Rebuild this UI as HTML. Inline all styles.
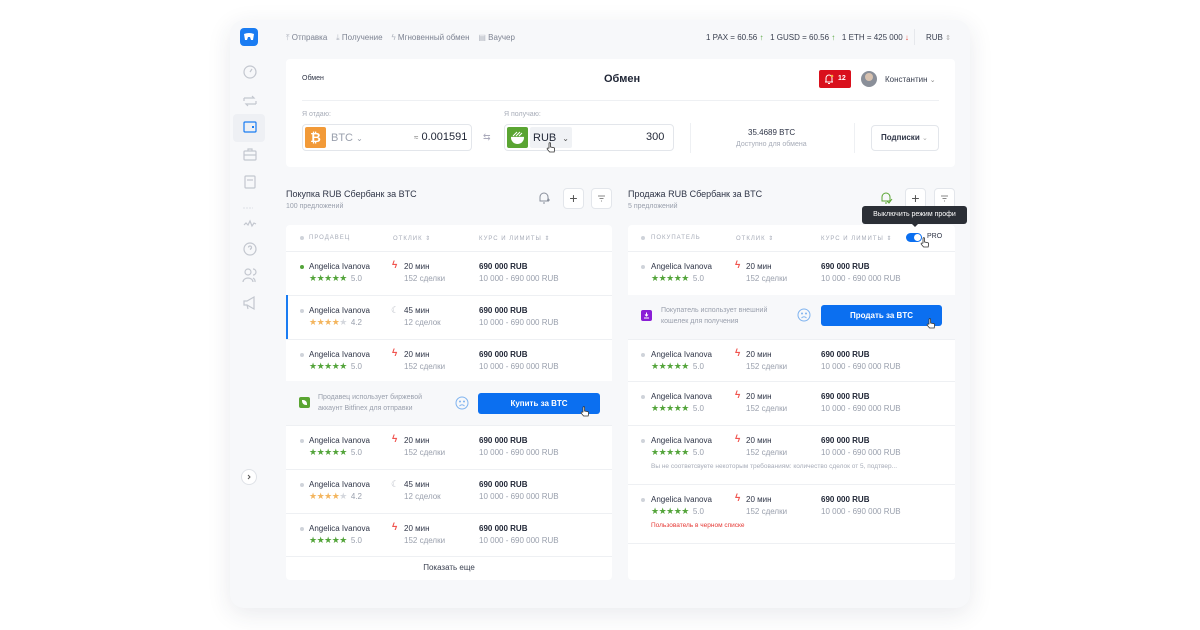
<!DOCTYPE html>
<html><head><meta charset="utf-8">
<style>
*{margin:0;padding:0;box-sizing:border-box}
body{width:1200px;height:630px;background:#fff;font-family:"Liberation Sans",sans-serif;color:#2a3040;position:relative;overflow:hidden}
.a{position:absolute}
.card{left:230px;top:20px;width:740px;height:588px;background:#f7f8fa;border-radius:14px;box-shadow:0 6px 24px rgba(40,50,80,.10)}
.panel{background:#fff;border-radius:4px}
.t8{font-size:8px}
.nm{font-size:8px;color:#2f3547}
.st{font-size:9px;letter-spacing:-0.5px;color:#53a43a}
.st.o{color:#f3b55e}
.st .e{color:#d4d7dd}
.rt{font-size:8px;color:#9aa0ad;margin-left:4px;letter-spacing:0}
.pr{font-size:8px;font-weight:bold;color:#1f2535}
.lm{font-size:8px;color:#9aa0ad}
.hd{font-size:6px;letter-spacing:1px;color:#a7acb8}
.line{height:1px;background:#eef0f3}
.dot{width:4px;height:4px;border-radius:50%;background:#cfd3da}
.btn{border:1px solid #e3e6eb;border-radius:4px;background:#fff}
.bolt{font-size:10px;color:#f0544f;font-weight:bold}
</style></head><body>
<div class="a card"></div>
<div class="a" style="left:240px;top:28px;width:18px;height:18px;border-radius:4px;background:#1a7cf2"></div>
<svg class="a" style="left:243px;top:32px" width="12" height="10" viewBox="0 0 12 10"><path d="M1 2 Q6 0 11 2 L10 8 L8 8 L7 5 L5 5 L4 8 L2 8Z" fill="#fff"/></svg>
<div class="a" style="left:233px;top:114px;width:32px;height:28px;border-radius:4px;background:#eef0f4"></div>
<svg class="a" style="left:240px;top:63px" width="20" height="260" viewBox="0 0 20 260" fill="none" stroke="#c3c7cf" stroke-width="1.2">
<circle cx="10" cy="9" r="6"/><path d="M10 9 L12 6"/>
<path d="M4 35 h10 l-2 -2 M16 41 h-10 l2 2 M4 35 v3 M16 41 v-3"/>
<rect x="4" y="59" width="12" height="10" rx="1" stroke="#1a7cf2"/><rect x="12" y="63" width="2" height="2" fill="#1a7cf2" stroke="none"/>
<rect x="4" y="88" width="12" height="9" rx="1"/><path d="M8 88 v-2 h4 v2 M4 92 h12"/>
<rect x="5" y="113" width="10" height="12" rx="1"/><path d="M7 117 h6"/>
<path d="M3 145 h10" stroke="#e3e5ea" stroke-dasharray="2 1"/>
<path d="M4 162 l2 -2 l2 2 l2 -4 l2 5 l2 -3 l2 1"/>
<circle cx="10" cy="186" r="6"/><path d="M8.5 184.5 a1.5 1.5 0 1 1 2 1.4 v1"/>
<circle cx="8" cy="209" r="3"/><path d="M3 219 a5 4 0 0 1 10 0 M13 206 a3 3 0 0 1 0 6 M15 219 a4 4 0 0 0 -2 -4"/>
<path d="M4 238 h3 l7 -4 v12 l-7 -4 h-3z M7 242 l1 4"/>
</svg>
<div class="a" style="left:241px;top:469px;width:16px;height:16px;border-radius:50%;background:#fff;border:1px solid #dfe2e7"></div>
<svg class="a" style="left:246px;top:474px" width="6" height="6" viewBox="0 0 6 6"><path d="M2 1 L4 3 L2 5" stroke="#555" fill="none"/></svg>
<div class="a t8" style="left:286px;top:33px;color:#7d8392">
<span style="color:#b0b5bf">⤒</span> Отправка &nbsp;&nbsp; <span style="color:#b0b5bf">⤓</span> Получение &nbsp;&nbsp; <span style="color:#b0b5bf">ϟ</span> Мгновенный обмен &nbsp;&nbsp; <span style="color:#b0b5bf">▤</span> Ваучер</div>
<div class="a t8" style="left:706px;top:33px;color:#3a4050">1 PAX = 60.56 <span style="color:#53a43a">↑</span>&nbsp;&nbsp; 1 GUSD = 60.56 <span style="color:#53a43a">↑</span>&nbsp;&nbsp; 1 ETH = 425 000 <span style="color:#e64a3c">↓</span></div>
<div class="a" style="left:914px;top:29px;width:1px;height:16px;background:#e6e8ec"></div>
<div class="a t8" style="left:926px;top:33px;color:#3a4050">RUB <span style="color:#aaa;font-size:7px">⇕</span></div>
<div class="a panel" style="left:286px;top:59px;width:669px;height:108px"></div>
<div class="a" style="left:302px;top:75px;font-size:7px;color:#2f3547">Обмен</div>
<div class="a" style="left:604px;top:73px;font-size:11px;font-weight:bold;color:#1f2535">Обмен</div>
<div class="a" style="left:819px;top:70px;width:32px;height:18px;border-radius:2px;background:#d9101c"></div>
<svg class="a" style="left:823px;top:73px" width="12" height="12" viewBox="0 0 12 12" fill="none" stroke="#fff" stroke-width="1"><path d="M3 9 V5 a3 3 0 0 1 6 0 V9 Z M2 9 h8 M5 10.5 h2"/><circle cx="9" cy="3" r="1.3" fill="#f6b042" stroke="none"/></svg>
<div class="a" style="left:838px;top:75px;font-size:7px;font-weight:bold;color:#fff">12</div>
<div class="a" style="left:861px;top:71px;width:16px;height:16px;border-radius:50%;background:#8a8f99"></div>
<div class="a" style="left:865px;top:73px;width:8px;height:8px;border-radius:50%;background:#d8c2b0"></div>
<div class="a t8" style="left:885px;top:75px;color:#3a4050">Константин <span style="color:#888;font-size:7px">⌄</span></div>
<div class="a line" style="left:302px;top:100px;width:637px"></div>
<div class="a" style="left:302px;top:111px;font-size:7px;color:#a7acb8">Я отдаю:</div>
<div class="a" style="left:504px;top:111px;font-size:7px;color:#a7acb8">Я получаю:</div>
<div class="a btn" style="left:302px;top:124px;width:170px;height:27px"></div>
<div class="a" style="left:305px;top:127px;width:21px;height:21px;border-radius:2px;background:#f29a38;color:#fff;font-weight:bold;font-size:13px;text-align:center;line-height:21px">₿</div>
<div class="a" style="left:331px;top:132px;font-size:11px;color:#9aa0ad">BTC <span style="font-size:8px">⌄</span></div>
<div class="a" style="left:414px;top:131px;font-size:11px;color:#1f2535"><span style="font-size:8px;color:#777">≈</span> 0.001591</div>
<div class="a" style="left:483px;top:132px;font-size:9px;color:#aab">⇆</div>
<div class="a btn" style="left:504px;top:124px;width:170px;height:27px"></div>
<div class="a" style="left:530px;top:127px;width:42px;height:21px;border-radius:2px;background:#f0f2f5"></div>
<div class="a" style="left:507px;top:127px;width:21px;height:21px;border-radius:2px;background:#5aa532"></div>
<div class="a" style="left:511px;top:131px;width:13px;height:13px;border-radius:50%;background:#fff;clip-path:inset(45% 0 0 0)"></div>
<svg class="a" style="left:511px;top:130px" width="13" height="7"><path d="M2 6 L6 2 M5 6 L9 2 M8 6 L11 3" stroke="#fff" stroke-width="1"/></svg>
<div class="a" style="left:533px;top:132px;font-size:11px;color:#1f2535">RUB <span style="font-size:8px;color:#555;margin-left:3px">⌄</span></div>
<div class="a" style="left:646px;top:131px;font-size:11px;color:#1f2535">300</div>
<div class="a" style="left:690px;top:123px;width:1px;height:30px;background:#eef0f3"></div>
<div class="a" style="left:854px;top:123px;width:1px;height:30px;background:#eef0f3"></div>
<div class="a" style="left:748px;top:128px;font-size:8px;color:#2f3547">35.4689 BTC</div>
<div class="a" style="left:736px;top:141px;font-size:7px;color:#a7acb8">Доступно для обмена</div>
<div class="a btn" style="left:871px;top:125px;width:68px;height:26px"></div>
<div class="a" style="left:881px;top:133px;font-size:8px;font-weight:bold;color:#2f3547">Подписки <span style="font-weight:normal;color:#aaa;font-size:7px">⌄</span></div>

<div class="a" style="left:286px;top:189px;font-size:9px;color:#2f3547">Покупка RUB Сбербанк за BTC</div>
<div class="a" style="left:286px;top:203px;font-size:7px;color:#9aa0ad">100 предложений</div>
<svg class="a" style="left:537px;top:191px" width="14" height="14" viewBox="0 0 14 14" fill="none" stroke="#8a909c" stroke-width="1"><path d="M3 10 V6 a4 4 0 0 1 8 0 V10 Z M6 12 h2 M10 9 h3 M11.5 7.5 v3"/></svg>
<div class="a btn" style="left:563px;top:188px;width:21px;height:21px;text-align:center;line-height:19px;font-size:14px;color:#555">+</div>
<div class="a btn" style="left:591px;top:188px;width:21px;height:21px"></div>
<svg class="a" style="left:597px;top:194px" width="9" height="9"><path d="M1 2h7M2.5 4.5h4M4 7h1" stroke="#888"/></svg>
<div class="a" style="left:628px;top:189px;font-size:9px;color:#2f3547">Продажа RUB Сбербанк за BTC</div>
<div class="a" style="left:628px;top:203px;font-size:7px;color:#9aa0ad">5 предложений</div>
<svg class="a" style="left:879px;top:191px" width="14" height="14" viewBox="0 0 14 14" fill="none" stroke="#5aa532" stroke-width="1"><path d="M3 10 V6 a4 4 0 0 1 8 0 V10 Z M6 12 h2 M8 10 l2 2 l3 -4"/></svg>
<div class="a btn" style="left:905px;top:188px;width:21px;height:21px;text-align:center;line-height:19px;font-size:14px;color:#555">+</div>
<div class="a btn" style="left:934px;top:188px;width:21px;height:21px"></div>
<svg class="a" style="left:940px;top:194px" width="9" height="9"><path d="M1 2h7M2.5 4.5h4M4 7h1" stroke="#888"/></svg>

<div class="a panel" style="left:286px;top:225px;width:326px;height:355px;overflow:hidden">
 <div class="a dot" style="left:14px;top:11px"></div>
 <div class="a hd" style="left:23px;top:10px">ПРОДАВЕЦ</div>
 <div class="a hd" style="left:107px;top:10px">ОТКЛИК ⇕</div>
 <div class="a hd" style="left:193px;top:10px">КУРС И ЛИМИТЫ ⇕</div>
 <div class="a line" style="left:0;top:26px;width:326px"></div>
 <div class="a" style="left:0;top:26px;width:326px;height:44px">
  <div class="a dot" style="left:14px;top:14px;background:#53a43a"></div>
  <div class="a nm" style="left:23px;top:11px">Angelica Ivanova</div>
  <div class="a st" style="left:23px;top:22px">★★★★★<span class="rt">5.0</span></div>
  <div class="a bolt" style="left:106px;top:9px">ϟ</div>
  <div class="a nm" style="left:118px;top:11px">20 мин</div>
  <div class="a lm" style="left:118px;top:23px">152 сделки</div>
  <div class="a pr" style="left:193px;top:11px">690 000 RUB</div>
  <div class="a lm" style="left:193px;top:23px">10 000 - 690 000 RUB</div>
 </div>
 <div class="a line" style="left:0;top:70px;width:326px"></div>
 <div class="a" style="left:0;top:70px;width:2px;height:44px;background:#1a7cf2"></div>
 <div class="a" style="left:0;top:70px;width:326px;height:44px">
  <div class="a dot" style="left:14px;top:14px"></div>
  <div class="a nm" style="left:23px;top:11px">Angelica Ivanova</div>
  <div class="a st o" style="left:23px;top:22px">★★★★<span class="e">★</span><span class="rt">4.2</span></div>
  <div class="a" style="left:105px;top:10px;font-size:9px;color:#b9bdc6">☾</div>
  <div class="a nm" style="left:118px;top:11px">45 мин</div>
  <div class="a lm" style="left:118px;top:23px">12 сделок</div>
  <div class="a pr" style="left:193px;top:11px">690 000 RUB</div>
  <div class="a lm" style="left:193px;top:23px">10 000 - 690 000 RUB</div>
 </div>
 <div class="a line" style="left:0;top:114px;width:326px"></div>
 <div class="a" style="left:0;top:114px;width:326px;height:42px">
  <div class="a dot" style="left:14px;top:14px"></div>
  <div class="a nm" style="left:23px;top:11px">Angelica Ivanova</div>
  <div class="a st" style="left:23px;top:22px">★★★★★<span class="rt">5.0</span></div>
  <div class="a bolt" style="left:106px;top:9px">ϟ</div>
  <div class="a nm" style="left:118px;top:11px">20 мин</div>
  <div class="a lm" style="left:118px;top:23px">152 сделки</div>
  <div class="a pr" style="left:193px;top:11px">690 000 RUB</div>
  <div class="a lm" style="left:193px;top:23px">10 000 - 690 000 RUB</div>
 </div>
 <div class="a" style="left:0;top:156px;width:326px;height:44px;background:#f7f8fa">
  <div class="a" style="left:13px;top:16px;width:11px;height:11px;border-radius:2px;background:#5aa532"></div>
  <div class="a" style="left:16px;top:19px;width:5px;height:5px;border-radius:0 4px 0 4px;background:#fff"></div>
  <div class="a" style="left:32px;top:11px;font-size:7px;line-height:11px;color:#9aa0ad">Продавец использует биржевой<br>аккаунт Bitfinex для отправки</div>
  <svg class="a" style="left:169px;top:15px" width="14" height="14" viewBox="0 0 14 14" fill="none" stroke="#7fb3ef" stroke-width="1"><circle cx="7" cy="7" r="6"/><path d="M4.5 10 q2.5-2.5 5 0"/><circle cx="5" cy="5.5" r=".5" fill="#7fb3ef"/><circle cx="9" cy="5.5" r=".5" fill="#7fb3ef"/></svg>
  <div class="a" style="left:192px;top:12px;width:122px;height:21px;border-radius:3px;background:#0b6ff0;color:#fff;font-size:8px;font-weight:bold;text-align:center;line-height:21px">Купить за BTC</div>
 </div>
 <div class="a line" style="left:0;top:200px;width:326px"></div>
 <div class="a" style="left:0;top:200px;width:326px;height:44px">
  <div class="a dot" style="left:14px;top:14px"></div>
  <div class="a nm" style="left:23px;top:11px">Angelica Ivanova</div>
  <div class="a st" style="left:23px;top:22px">★★★★★<span class="rt">5.0</span></div>
  <div class="a bolt" style="left:106px;top:9px">ϟ</div>
  <div class="a nm" style="left:118px;top:11px">20 мин</div>
  <div class="a lm" style="left:118px;top:23px">152 сделки</div>
  <div class="a pr" style="left:193px;top:11px">690 000 RUB</div>
  <div class="a lm" style="left:193px;top:23px">10 000 - 690 000 RUB</div>
 </div>
 <div class="a line" style="left:0;top:244px;width:326px"></div>
 <div class="a" style="left:0;top:244px;width:326px;height:44px">
  <div class="a dot" style="left:14px;top:14px"></div>
  <div class="a nm" style="left:23px;top:11px">Angelica Ivanova</div>
  <div class="a st o" style="left:23px;top:22px">★★★★<span class="e">★</span><span class="rt">4.2</span></div>
  <div class="a" style="left:105px;top:10px;font-size:9px;color:#b9bdc6">☾</div>
  <div class="a nm" style="left:118px;top:11px">45 мин</div>
  <div class="a lm" style="left:118px;top:23px">12 сделок</div>
  <div class="a pr" style="left:193px;top:11px">690 000 RUB</div>
  <div class="a lm" style="left:193px;top:23px">10 000 - 690 000 RUB</div>
 </div>
 <div class="a line" style="left:0;top:288px;width:326px"></div>
 <div class="a" style="left:0;top:288px;width:326px;height:43px">
  <div class="a dot" style="left:14px;top:14px"></div>
  <div class="a nm" style="left:23px;top:11px">Angelica Ivanova</div>
  <div class="a st" style="left:23px;top:22px">★★★★★<span class="rt">5.0</span></div>
  <div class="a bolt" style="left:106px;top:9px">ϟ</div>
  <div class="a nm" style="left:118px;top:11px">20 мин</div>
  <div class="a lm" style="left:118px;top:23px">152 сделки</div>
  <div class="a pr" style="left:193px;top:11px">690 000 RUB</div>
  <div class="a lm" style="left:193px;top:23px">10 000 - 690 000 RUB</div>
 </div>
 <div class="a line" style="left:0;top:331px;width:326px"></div>
 <div class="a" style="left:0;top:338px;width:326px;text-align:center;font-size:8px;color:#3a4050">Показать еще</div>
</div>

<div class="a panel" style="left:628px;top:225px;width:327px;height:355px;overflow:hidden">
 <div class="a dot" style="left:13px;top:11px"></div>
 <div class="a hd" style="left:23px;top:10px">ПОКУПАТЕЛЬ</div>
 <div class="a hd" style="left:108px;top:10px">ОТКЛИК ⇕</div>
 <div class="a hd" style="left:193px;top:10px">КУРС И ЛИМИТЫ ⇕</div>
 <div class="a" style="left:278px;top:8px;width:16px;height:9px;border-radius:5px;background:#0b6ff0"></div>
 <div class="a" style="left:286px;top:9px;width:7px;height:7px;border-radius:50%;background:#fff"></div>
 <div class="a" style="left:299px;top:8px;font-size:7px;color:#2f3547">PRO</div>
 <div class="a line" style="left:0;top:26px;width:327px"></div>
 <div class="a" style="left:0;top:26px;width:327px;height:44px">
  <div class="a dot" style="left:13px;top:14px"></div>
  <div class="a nm" style="left:23px;top:11px">Angelica Ivanova</div>
  <div class="a st" style="left:23px;top:22px">★★★★★<span class="rt">5.0</span></div>
  <div class="a bolt" style="left:107px;top:9px">ϟ</div>
  <div class="a nm" style="left:118px;top:11px">20 мин</div>
  <div class="a lm" style="left:118px;top:23px">152 сделки</div>
  <div class="a pr" style="left:193px;top:11px">690 000 RUB</div>
  <div class="a lm" style="left:193px;top:23px">10 000 - 690 000 RUB</div>
 </div>
 <div class="a" style="left:0;top:70px;width:327px;height:44px;background:#f7f8fa">
  <div class="a" style="left:13px;top:15px;width:11px;height:11px;border-radius:2px;background:#8a1ed6"></div>
  <svg class="a" style="left:15px;top:17px" width="7" height="7"><path d="M3.5 0.5v3.5M2 2.5l1.5 1.5 1.5-1.5M1 6h5" stroke="#fff" stroke-width="1" fill="none"/></svg>
  <div class="a" style="left:33px;top:10px;font-size:7px;line-height:11px;color:#9aa0ad">Покупатель использует внешний<br>кошелек для получения</div>
  <svg class="a" style="left:169px;top:13px" width="14" height="14" viewBox="0 0 14 14" fill="none" stroke="#7fb3ef" stroke-width="1"><circle cx="7" cy="7" r="6"/><path d="M4.5 10 q2.5-2.5 5 0"/><circle cx="5" cy="5.5" r=".5" fill="#7fb3ef"/><circle cx="9" cy="5.5" r=".5" fill="#7fb3ef"/></svg>
  <div class="a" style="left:193px;top:10px;width:121px;height:21px;border-radius:3px;background:#0b6ff0;color:#fff;font-size:8px;font-weight:bold;text-align:center;line-height:21px">Продать за BTC</div>
 </div>
 <div class="a line" style="left:0;top:114px;width:327px"></div>
 <div class="a" style="left:0;top:114px;width:327px;height:42px">
  <div class="a dot" style="left:13px;top:14px"></div>
  <div class="a nm" style="left:23px;top:11px">Angelica Ivanova</div>
  <div class="a st" style="left:23px;top:22px">★★★★★<span class="rt">5.0</span></div>
  <div class="a bolt" style="left:107px;top:9px">ϟ</div>
  <div class="a nm" style="left:118px;top:11px">20 мин</div>
  <div class="a lm" style="left:118px;top:23px">152 сделки</div>
  <div class="a pr" style="left:193px;top:11px">690 000 RUB</div>
  <div class="a lm" style="left:193px;top:23px">10 000 - 690 000 RUB</div>
 </div>
 <div class="a line" style="left:0;top:156px;width:327px"></div>
 <div class="a" style="left:0;top:156px;width:327px;height:44px">
  <div class="a dot" style="left:13px;top:14px"></div>
  <div class="a nm" style="left:23px;top:11px">Angelica Ivanova</div>
  <div class="a st" style="left:23px;top:22px">★★★★★<span class="rt">5.0</span></div>
  <div class="a bolt" style="left:107px;top:9px">ϟ</div>
  <div class="a nm" style="left:118px;top:11px">20 мин</div>
  <div class="a lm" style="left:118px;top:23px">152 сделки</div>
  <div class="a pr" style="left:193px;top:11px">690 000 RUB</div>
  <div class="a lm" style="left:193px;top:23px">10 000 - 690 000 RUB</div>
 </div>
 <div class="a line" style="left:0;top:200px;width:327px"></div>
 <div class="a" style="left:0;top:200px;width:327px;height:59px">
  <div class="a dot" style="left:13px;top:14px"></div>
  <div class="a nm" style="left:23px;top:11px">Angelica Ivanova</div>
  <div class="a st" style="left:23px;top:22px">★★★★★<span class="rt">5.0</span></div>
  <div class="a bolt" style="left:107px;top:9px">ϟ</div>
  <div class="a nm" style="left:118px;top:11px">20 мин</div>
  <div class="a lm" style="left:118px;top:23px">152 сделки</div>
  <div class="a pr" style="left:193px;top:11px">690 000 RUB</div>
  <div class="a lm" style="left:193px;top:23px">10 000 - 690 000 RUB</div>
  <div class="a" style="left:23px;top:38px;font-size:6.5px;color:#a7acb8;white-space:nowrap">Вы не соответсвуете некоторым требованиям: количество сделок от 5, подтвер...</div>
 </div>
 <div class="a line" style="left:0;top:259px;width:327px"></div>
 <div class="a" style="left:0;top:259px;width:327px;height:59px">
  <div class="a dot" style="left:13px;top:14px"></div>
  <div class="a nm" style="left:23px;top:11px">Angelica Ivanova</div>
  <div class="a st" style="left:23px;top:22px">★★★★★<span class="rt">5.0</span></div>
  <div class="a bolt" style="left:107px;top:9px">ϟ</div>
  <div class="a nm" style="left:118px;top:11px">20 мин</div>
  <div class="a lm" style="left:118px;top:23px">152 сделки</div>
  <div class="a pr" style="left:193px;top:11px">690 000 RUB</div>
  <div class="a lm" style="left:193px;top:23px">10 000 - 690 000 RUB</div>
  <div class="a" style="left:23px;top:38px;font-size:6.5px;color:#e53935">Пользователь в черном списке</div>
 </div>
 <div class="a line" style="left:0;top:318px;width:327px"></div>
</div>

<div class="a" style="left:862px;top:206px;width:105px;height:18px;border-radius:3px;background:#2b2f36;color:#fff;font-size:7px;text-align:center;line-height:18px">Выключить режим профи</div>
<div class="a" style="left:911px;top:223px;width:0;height:0;border-left:4px solid transparent;border-right:4px solid transparent;border-top:4px solid #2b2f36"></div>
<svg width="0" height="0" style="position:absolute"><defs><symbol id="hand" viewBox="0 0 10 12"><path d="M3 6 V1.5 a0.8 0.8 0 0 1 1.6 0 V5 l3 0.6 a1.2 1.2 0 0 1 1 1.3 L8.2 10 H3.6 L1.2 7.2 a0.8 0.8 0 0 1 1.2 -1 Z" fill="#fff" stroke="#333" stroke-width="0.8"/></symbol></defs></svg>
<svg class="a" style="left:546px;top:142px" width="10" height="12"><use href="#hand"/></svg>
<svg class="a" style="left:920px;top:237px" width="10" height="12"><use href="#hand"/></svg>
<svg class="a" style="left:580px;top:406px" width="10" height="12"><use href="#hand"/></svg>
<svg class="a" style="left:926px;top:318px" width="10" height="12"><use href="#hand"/></svg>
</body></html>
